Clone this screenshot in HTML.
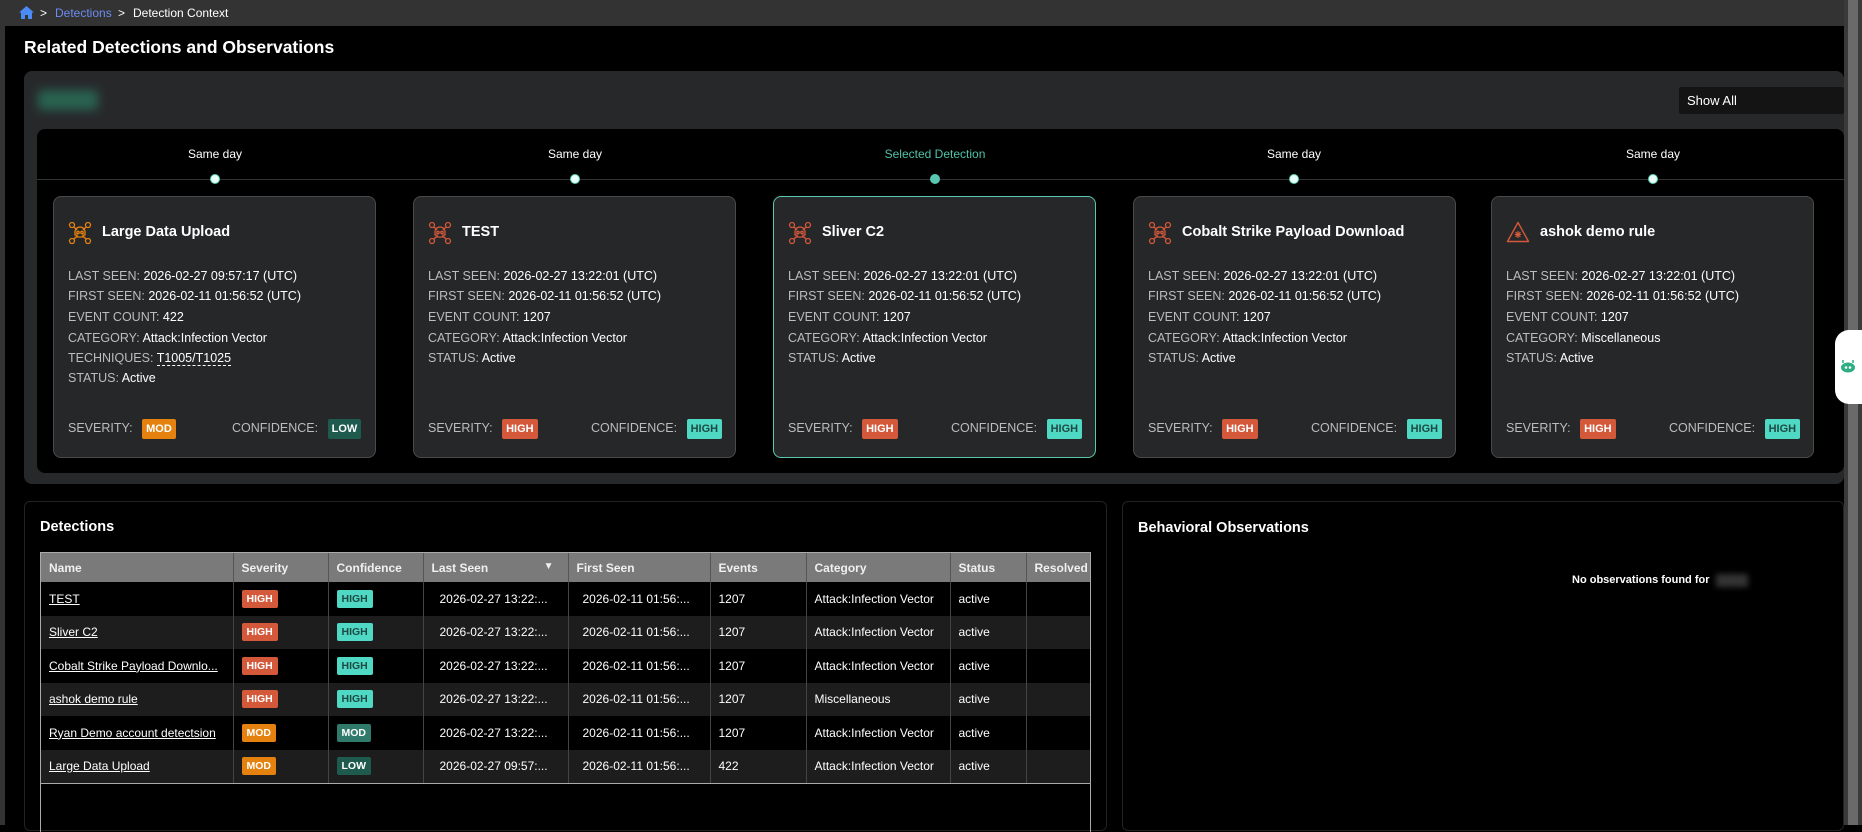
<!DOCTYPE html>
<html><head><meta charset="utf-8"><style>
*{box-sizing:border-box;margin:0;padding:0}
body{width:1862px;height:825px;background:#000;font-family:"Liberation Sans",sans-serif;color:#fff;position:relative;overflow:hidden;font-size:13px}
.a{position:absolute}
.crumb{left:0;top:0;width:1844px;height:26px;background:#333;font-size:12px;line-height:26px}
.card{position:absolute;top:196px;width:323px;height:262px;background:#262729;border:1px solid #4a4a4a;border-radius:8px}
.card.sel{border-color:#5ac8b0}
.ct{position:absolute;left:48px;top:27px;font-size:14.5px;font-weight:bold}
.ic{position:absolute;left:14px;top:24px}
.ln{position:absolute;left:14px;font-size:12.5px;color:#fff;white-space:nowrap}
.ln b{font-weight:normal;color:#bcbcbc}
.bd{display:inline-block;height:20px;line-height:20px;padding:0 4px;border-radius:2px;font-size:11px;font-weight:bold}
.hi{background:#d4583a;color:#fff}.th{background:#4fd8c4;color:#1f4a44}.mo{background:#e5820f;color:#fff}.lo{background:#1f5a4e;color:#fff}.cm{background:#2f7a6a;color:#fff}
.tl{position:absolute;top:147px;font-size:12px;transform:translateX(-50%);white-space:nowrap}
.dot{position:absolute;top:174px;width:10px;height:10px;border-radius:50%;background:#e8fff8;border:1px solid #5ac8b0;transform:translateX(-50%)}
table{border-collapse:collapse;font-size:12px;table-layout:fixed}
th{background:#7a7a7a;height:29px;text-align:left;padding-left:8px;font-weight:bold;border-right:1px solid #555;color:#f0f0f0}
td{height:33.5px;padding-left:8px;border-right:1px solid #444;white-space:nowrap;overflow:hidden}
tr:nth-child(odd) td{background:#1d1d1d}
td u{color:#fff}
.sb{font-size:10.5px;height:18px;line-height:18px;padding:0 5px}
</style></head><body>
<div class="a crumb"><svg class="a" style="left:19px;top:6px" width="15" height="13" viewBox="0 0 15 13"><path d="M7.5 0L0 6.5h2V13h4V9h3v4h4V6.5h2z" fill="#4b8bf5"/></svg><span class="a" style="left:40px">&gt;</span><span class="a" style="left:55px;color:#6b8cf0">Detections</span><span class="a" style="left:118px">&gt;</span><span class="a" style="left:133px">Detection Context</span></div>
<div class="a" style="left:0;top:26px;width:5px;height:799px;background:#333"></div>
<div class="a" style="left:1844px;top:0;width:18px;height:825px;background:#3a3a3a"></div>
<div class="a" style="left:1848px;top:0;width:10px;height:825px;background:#6a6a6a"></div>
<div class="a" style="left:24px;top:37px;font-size:17.5px;font-weight:bold">Related Detections and Observations</div>
<div class="a" style="left:24px;top:71px;width:1820px;height:413px;background:#27282a;border-radius:8px"></div>
<div class="a" style="left:38px;top:90px;width:60px;height:20px;background:#2b8a6a;filter:blur(5px);opacity:.6"></div>
<div class="a" style="left:1679px;top:87px;width:165px;height:27px;background:#141414;border-radius:2px;font-size:13px;line-height:27px;padding-left:8px">Show All</div>
<div class="a" style="left:37px;top:129px;width:1807px;height:344px;background:#000;border-radius:8px"></div>
<div class="a" style="left:37px;top:179px;width:1807px;height:1px;background:#333"></div>
<div class="tl" style="left:215px">Same day</div><div class="dot" style="left:215px"></div>
<div class="tl" style="left:575px">Same day</div><div class="dot" style="left:575px"></div>
<div class="tl" style="left:935px;color:#4fc3a8">Selected Detection</div><div class="dot" style="left:935px;background:#5ac8b0"></div>
<div class="tl" style="left:1294px">Same day</div><div class="dot" style="left:1294px"></div>
<div class="tl" style="left:1653px">Same day</div><div class="dot" style="left:1653px"></div>

<svg width="0" height="0" style="position:absolute"><defs><g id="sk" fill="none" stroke-width="1.3"><circle cx="4" cy="4" r="2.5"/><circle cx="20" cy="4" r="2.5"/><circle cx="4" cy="20" r="2.5"/><circle cx="20" cy="20" r="2.5"/><path d="M6 6l3 3M18 6l-3 3M6 18l3-3M18 18l-3-3"/><path d="M7 11a5 5 0 0 1 10 0v3h-2v2H9v-2H7z"/><circle cx="10" cy="11.5" r="1.2"/><circle cx="14" cy="11.5" r="1.2"/></g></defs></svg>

<div class="card" style="left:53px">
<svg class="ic" width="24" height="24" viewBox="0 0 24 24" stroke="#e5820f"><use href="#sk"/></svg>
<div class="ct">Large Data Upload</div>
<div class="ln" style="top:72px"><b>LAST SEEN:</b> 2026-02-27 09:57:17 (UTC)</div>
<div class="ln" style="top:92px"><b>FIRST SEEN:</b> 2026-02-11 01:56:52 (UTC)</div>
<div class="ln" style="top:113px"><b>EVENT COUNT:</b> 422</div>
<div class="ln" style="top:134px"><b>CATEGORY:</b> Attack:Infection Vector</div>
<div class="ln" style="top:154px"><b>TECHNIQUES:</b> <span style="border-bottom:1px dashed #fff">T1005/T1025</span></div>
<div class="ln" style="top:174px"><b>STATUS:</b> Active</div>
<div class="ln" style="top:222px"><b>SEVERITY:</b> <span class="bd mo" style="margin-left:6px">MOD</span></div>
<div class="ln" style="top:222px;left:178px"><b>CONFIDENCE:</b> <span class="bd lo" style="margin-left:6px">LOW</span></div>
</div>

<div class="card" style="left:413px">
<svg class="ic" width="24" height="24" viewBox="0 0 24 24" stroke="#d4583a"><use href="#sk"/></svg>
<div class="ct">TEST</div>
<div class="ln" style="top:72px"><b>LAST SEEN:</b> 2026-02-27 13:22:01 (UTC)</div>
<div class="ln" style="top:92px"><b>FIRST SEEN:</b> 2026-02-11 01:56:52 (UTC)</div>
<div class="ln" style="top:113px"><b>EVENT COUNT:</b> 1207</div>
<div class="ln" style="top:134px"><b>CATEGORY:</b> Attack:Infection Vector</div>
<div class="ln" style="top:154px"><b>STATUS:</b> Active</div>
<div class="ln" style="top:222px"><b>SEVERITY:</b> <span class="bd hi" style="margin-left:6px">HIGH</span></div>
<div class="ln" style="top:222px;left:177px"><b>CONFIDENCE:</b> <span class="bd th" style="margin-left:6px">HIGH</span></div>
</div>

<div class="card sel" style="left:773px">
<svg class="ic" width="24" height="24" viewBox="0 0 24 24" stroke="#d4583a"><use href="#sk"/></svg>
<div class="ct">Sliver C2</div>
<div class="ln" style="top:72px"><b>LAST SEEN:</b> 2026-02-27 13:22:01 (UTC)</div>
<div class="ln" style="top:92px"><b>FIRST SEEN:</b> 2026-02-11 01:56:52 (UTC)</div>
<div class="ln" style="top:113px"><b>EVENT COUNT:</b> 1207</div>
<div class="ln" style="top:134px"><b>CATEGORY:</b> Attack:Infection Vector</div>
<div class="ln" style="top:154px"><b>STATUS:</b> Active</div>
<div class="ln" style="top:222px"><b>SEVERITY:</b> <span class="bd hi" style="margin-left:6px">HIGH</span></div>
<div class="ln" style="top:222px;left:177px"><b>CONFIDENCE:</b> <span class="bd th" style="margin-left:6px">HIGH</span></div>
</div>

<div class="card" style="left:1133px">
<svg class="ic" width="24" height="24" viewBox="0 0 24 24" stroke="#d4583a"><use href="#sk"/></svg>
<div class="ct">Cobalt Strike Payload Download</div>
<div class="ln" style="top:72px"><b>LAST SEEN:</b> 2026-02-27 13:22:01 (UTC)</div>
<div class="ln" style="top:92px"><b>FIRST SEEN:</b> 2026-02-11 01:56:52 (UTC)</div>
<div class="ln" style="top:113px"><b>EVENT COUNT:</b> 1207</div>
<div class="ln" style="top:134px"><b>CATEGORY:</b> Attack:Infection Vector</div>
<div class="ln" style="top:154px"><b>STATUS:</b> Active</div>
<div class="ln" style="top:222px"><b>SEVERITY:</b> <span class="bd hi" style="margin-left:6px">HIGH</span></div>
<div class="ln" style="top:222px;left:177px"><b>CONFIDENCE:</b> <span class="bd th" style="margin-left:6px">HIGH</span></div>
</div>

<div class="card" style="left:1491px">
<svg class="ic" width="24" height="22" viewBox="0 0 24 22"><path d="M12 1.5L1.5 20.5h21z" fill="none" stroke="#d4583a" stroke-width="1.4" stroke-linejoin="round"/><path d="M12 10v7M8.8 13.5h6.4M9.6 11.1l4.8 4.8M14.4 11.1l-4.8 4.8" stroke="#d4583a" stroke-width="1.2"/></svg>
<div class="ct">ashok demo rule</div>
<div class="ln" style="top:72px"><b>LAST SEEN:</b> 2026-02-27 13:22:01 (UTC)</div>
<div class="ln" style="top:92px"><b>FIRST SEEN:</b> 2026-02-11 01:56:52 (UTC)</div>
<div class="ln" style="top:113px"><b>EVENT COUNT:</b> 1207</div>
<div class="ln" style="top:134px"><b>CATEGORY:</b> Miscellaneous</div>
<div class="ln" style="top:154px"><b>STATUS:</b> Active</div>
<div class="ln" style="top:222px"><b>SEVERITY:</b> <span class="bd hi" style="margin-left:6px">HIGH</span></div>
<div class="ln" style="top:222px;left:177px"><b>CONFIDENCE:</b> <span class="bd th" style="margin-left:6px">HIGH</span></div>
</div>

<div class="a" style="left:1835px;top:330px;width:27px;height:74px;background:#fff;border-radius:14px 0 0 14px"></div>
<svg class="a" style="left:1840px;top:358px" width="16" height="16" viewBox="0 0 16 16"><path d="M3 2v3M13 2v3" stroke="#2dae82" stroke-width="1.5"/><ellipse cx="8" cy="9.5" rx="7" ry="5" fill="#2dae82"/><circle cx="6" cy="9.5" r="1.3" fill="#fff"/><circle cx="10" cy="9.5" r="1.3" fill="#fff"/></svg>

<div class="a" style="left:24px;top:501px;width:1083px;height:330px;border:1px solid #222;border-radius:6px"></div>
<div class="a" style="left:40px;top:519px;font-size:14.5px;font-weight:bold">Detections</div>
<div class="a" style="left:40px;top:552px;width:1051px;height:280px;border:1px solid #aaa;border-bottom:none;overflow:hidden">
<table style="width:1060px">
<colgroup><col style="width:192px"><col style="width:95px"><col style="width:95px"><col style="width:145px"><col style="width:142px"><col style="width:96px"><col style="width:144px"><col style="width:76px"><col style="width:75px"></colgroup>
<tr><th>Name</th><th>Severity</th><th>Confidence</th><th>Last Seen<span style="float:right;margin-right:14px;font-size:10px">▼</span></th><th>First Seen</th><th>Events</th><th>Category</th><th>Status</th><th>Resolved</th></tr>
<tr><td><u>TEST</u></td><td><span class="bd sb hi">HIGH</span></td><td><span class="bd sb th">HIGH</span></td><td style="padding-left:16px">2026-02-27 13:22:...</td><td style="padding-left:14px">2026-02-11 01:56:...</td><td>1207</td><td>Attack:Infection Vector</td><td>active</td><td></td></tr>
<tr><td><u>Sliver C2</u></td><td><span class="bd sb hi">HIGH</span></td><td><span class="bd sb th">HIGH</span></td><td style="padding-left:16px">2026-02-27 13:22:...</td><td style="padding-left:14px">2026-02-11 01:56:...</td><td>1207</td><td>Attack:Infection Vector</td><td>active</td><td></td></tr>
<tr><td><u>Cobalt Strike Payload Downlo...</u></td><td><span class="bd sb hi">HIGH</span></td><td><span class="bd sb th">HIGH</span></td><td style="padding-left:16px">2026-02-27 13:22:...</td><td style="padding-left:14px">2026-02-11 01:56:...</td><td>1207</td><td>Attack:Infection Vector</td><td>active</td><td></td></tr>
<tr><td><u>ashok demo rule</u></td><td><span class="bd sb hi">HIGH</span></td><td><span class="bd sb th">HIGH</span></td><td style="padding-left:16px">2026-02-27 13:22:...</td><td style="padding-left:14px">2026-02-11 01:56:...</td><td>1207</td><td>Miscellaneous</td><td>active</td><td></td></tr>
<tr><td><u>Ryan Demo account detectsion</u></td><td><span class="bd sb mo">MOD</span></td><td><span class="bd sb cm">MOD</span></td><td style="padding-left:16px">2026-02-27 13:22:...</td><td style="padding-left:14px">2026-02-11 01:56:...</td><td>1207</td><td>Attack:Infection Vector</td><td>active</td><td></td></tr>
<tr><td style="border-bottom:1px solid #aaa"><u>Large Data Upload</u></td><td style="border-bottom:1px solid #aaa"><span class="bd sb mo">MOD</span></td><td style="border-bottom:1px solid #aaa"><span class="bd sb lo">LOW</span></td><td style="padding-left:16px;border-bottom:1px solid #aaa">2026-02-27 09:57:...</td><td style="padding-left:14px;border-bottom:1px solid #aaa">2026-02-11 01:56:...</td><td style="border-bottom:1px solid #aaa">422</td><td style="border-bottom:1px solid #aaa">Attack:Infection Vector</td><td style="border-bottom:1px solid #aaa">active</td><td style="border-bottom:1px solid #aaa"></td></tr>
</table></div>

<div class="a" style="left:1122px;top:501px;width:722px;height:330px;border:1px solid #222;border-radius:6px"></div>
<div class="a" style="left:1138px;top:520px;font-size:14.5px;font-weight:bold">Behavioral Observations</div>
<div class="a" style="left:1572px;top:574px;font-size:11px;font-weight:bold">No observations found for</div>
<div class="a" style="left:1716px;top:574px;width:32px;height:13px;background:#333;filter:blur(3px)"></div>
</body></html>
